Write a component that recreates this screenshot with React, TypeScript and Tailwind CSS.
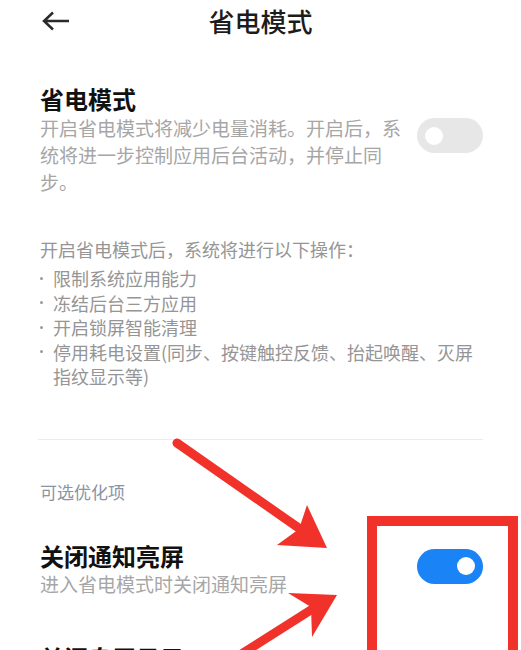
import { PropsWithChildren } from 'react';

const Toggle = ({ on = false }: { on?: boolean }) => (
  <div
    className={`flex h-[35px] w-[66px] shrink-0 items-center rounded-full px-[8px] ${
      on ? 'justify-end bg-[#1a83f5]' : 'justify-start bg-[#e7e7e7]'
    }`}
  >
    <div className="h-[18px] w-[18px] rounded-full bg-white" />
  </div>
);

const Bullet = ({ children }: PropsWithChildren) => (
  <li className="flex items-start">
    <span className="flex h-[24.5px] w-[13px] shrink-0 items-center">
      <span className="h-[3px] w-[3px] rounded-full bg-[#9a9a9a]" />
    </span>
    <span>{children}</span>
  </li>
);

const Annotation = () => (
  <svg
    className="pointer-events-none absolute left-0 top-0"
    width="521"
    height="650"
    viewBox="0 0 521 650"
  >
    <line x1="177" y1="443" x2="303" y2="531" stroke="#f0322b" strokeWidth="9" strokeLinecap="round" />
    <polygon points="327,548 307,505 299,529 277,545" fill="#f0322b" />
    <line x1="232" y1="660" x2="314" y2="608" stroke="#f0322b" strokeWidth="9" />
    <polygon points="337,595 288,593 311,607 312,637" fill="#f0322b" />
  </svg>
);

export default function App() {
  return (
    <div className="relative h-[650px] w-[521px] overflow-hidden bg-white font-['Noto_Sans_CJK_SC','Noto_Sans',sans-serif]">
      <header className="flex h-[42px] items-center px-[42px]">
        <svg width="28" height="20" viewBox="0 0 28 20" className="shrink-0">
          <path d="M2 10H27M11 1.5L2 10l9 8.5" fill="none" stroke="#2a2a2a" strokeWidth="2.5" />
        </svg>
        <h1 className="flex-1 text-center text-[26px] font-medium leading-[30px] text-[#1c1c1c]">省电模式</h1>
        <div className="w-[28px] shrink-0" />
      </header>

      <main className="pl-[40px] pr-[38px]">
        <section className="mt-[42px] flex items-start justify-between">
          <div className="w-[370px]">
            <h2 className="text-[24px] font-bold leading-[30px] text-[#111]">省电模式</h2>
            <p className="text-[19px] leading-[27px] text-[#a6a6a6]">
              开启省电模式将减少电量消耗。开启后，系统将进一步控制应用后台活动，并停止同步。
            </p>
          </div>
          <div className="mt-[34px]">
            <Toggle />
          </div>
        </section>

        <section className="text-[18px] text-[#959595]">
          <p className="mt-[41px] leading-[27px]">开启省电模式后，系统将进行以下操作：</p>
          <ul className="mt-[3px] leading-[24.5px]">
            <Bullet>限制系统应用能力</Bullet>
            <Bullet>冻结后台三方应用</Bullet>
            <Bullet>开启锁屏智能清理</Bullet>
            <Bullet>停用耗电设置(同步、按键触控反馈、抬起唤醒、灭屏指纹显示等)</Bullet>
          </ul>
        </section>

        <div className="ml-[-2px] mt-[50px] h-px bg-[#ececec]" />

        <p className="mt-[41px] text-[17px] leading-[22px] text-[#8a94a4]">可选优化项</p>

        <section className="mt-[38px] flex items-start justify-between">
          <div>
            <h2 className="text-[24px] font-bold leading-[30px] text-[#111]">关闭通知亮屏</h2>
            <p className="text-[19px] leading-[26px] text-[#a6a6a6]">进入省电模式时关闭通知亮屏</p>
          </div>
          <div className="mt-[8px]">
            <Toggle on />
          </div>
        </section>

        <section className="mt-[46px]">
          <h2 className="text-[24px] font-bold leading-[30px] text-[#111]">关闭息屏显示</h2>
        </section>
      </main>

      <div className="absolute left-[367px] top-[516px] h-[200px] w-[151px] border-[10px] border-[#f0322b]" />
      <Annotation />
    </div>
  );
}
